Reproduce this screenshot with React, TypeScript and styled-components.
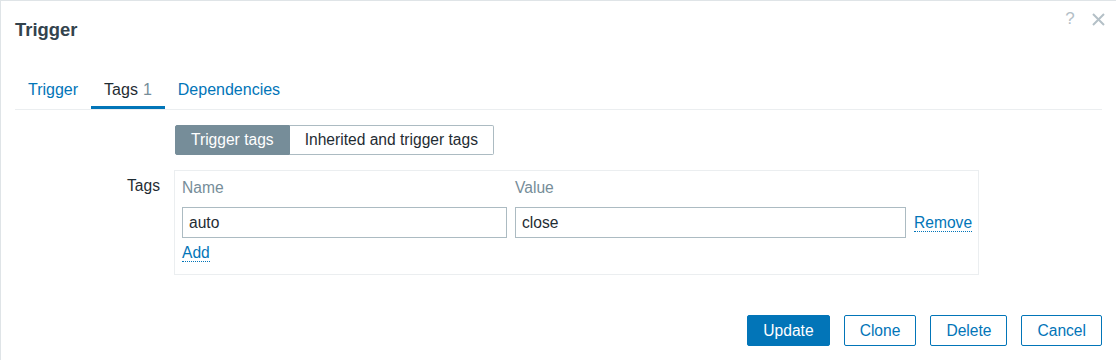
import React from 'react'
import styled, { createGlobalStyle } from 'styled-components'

const GlobalStyle = createGlobalStyle`
  html, body {
    margin: 0;
    padding: 0;
    background: #ffffff;
    overflow: hidden;
  }
  body {
    font-family: "Liberation Sans", Arial, sans-serif;
    font-size: 15.6px;
    color: #1f2c33;
  }
  * {
    box-sizing: border-box;
  }
`

const Dialog = styled.div`
  position: relative;
  display: flex;
  flex-direction: column;
  width: 1117px;
  height: 362px;
  border: 1px solid #dfe4e7;
  padding: 0 14px;
  background: #ffffff;
`

const Header = styled.div`
  display: flex;
  align-items: center;
  height: 58px;
`

const Title = styled.h4`
  margin: 0;
  font-size: 18.4px;
  font-weight: bold;
  color: #33434d;
`

const HeaderActions = styled.div`
  position: absolute;
  top: 8px;
  right: 8px;
  display: flex;
  gap: 8px;
`

const HeaderIcon = styled.button`
  display: flex;
  align-items: center;
  justify-content: center;
  width: 20px;
  height: 20px;
  padding: 0;
  border: 0;
  background: none;
  color: #b4c0c7;
  font-family: "Liberation Sans", Arial, sans-serif;
  font-size: 17px;
  cursor: pointer;
`

const TabList = styled.ul`
  display: flex;
  margin: 19px 0 0;
  padding: 0;
  list-style: none;
  border-bottom: 1px solid #ebeef0;
`

const Tab = styled.li<{ $active?: boolean }>`
  padding: 0 13px 4px;
  font-size: 16px;
  line-height: 24px;
  border-bottom: 3px solid ${(p) => (p.$active ? '#0275b8' : 'transparent')};
  color: ${(p) => (p.$active ? '#1f2c33' : '#0275b8')};
  cursor: pointer;
`

const TabCount = styled.span`
  margin-left: 5px;
  color: #768d99;
`

const Content = styled.div`
  padding-top: 15px;
`

const FormGrid = styled.div`
  display: grid;
  grid-template-columns: 145px auto;
  column-gap: 14px;
  row-gap: 15px;
  align-items: start;
`

const Label = styled.label`
  text-align: right;
  line-height: 24px;
  padding-top: 4px;
`

const Segmented = styled.div`
  display: flex;
  justify-self: start;
  margin-left: 1px;
`

const SegmentButton = styled.button<{ $active?: boolean }>`
  height: 30px;
  padding: 0 15px;
  font-family: inherit;
  font-size: 15.6px;
  background: ${(p) => (p.$active ? '#768d99' : '#ffffff')};
  color: ${(p) => (p.$active ? '#ffffff' : '#1f2c33')};
  border: 1px solid ${(p) => (p.$active ? '#768d99' : '#acbbc2')};
  cursor: pointer;

  &:first-child {
    border-radius: 2px 0 0 2px;
  }
  &:last-child {
    border-left: 0;
    border-radius: 0 2px 2px 0;
  }
`

const TagsTable = styled.div`
  display: grid;
  grid-template-columns: 325px 391px auto;
  column-gap: 8px;
  align-items: center;
  justify-self: start;
  width: 805px;
  padding: 4px 7px 9px;
  border: 1px solid #ebeef0;
`

const ColumnHead = styled.div`
  line-height: 26px;
  color: #768d99;
  margin-bottom: 6px;
`

const TextInput = styled.input`
  width: 100%;
  height: 31px;
  padding: 0 6px;
  border: 1px solid #acbbc2;
  border-radius: 0;
  font-family: inherit;
  font-size: 15.6px;
  color: #1f2c33;
  background: #ffffff;
  outline: none;
`

const LinkCell = styled.div`
  line-height: 24px;
`

const AddCell = styled(LinkCell)`
  grid-column: 1 / -1;
  margin-top: 3px;
`

const DottedLink = styled.a`
  color: #0275b8;
  text-decoration: none;
  border-bottom: 1px dotted #0275b8;
  cursor: pointer;
`

const Footer = styled.div`
  display: flex;
  justify-content: flex-end;
  gap: 14px;
  margin-top: 40px;
`

const Button = styled.button<{ $primary?: boolean }>`
  height: 31px;
  padding: 0 15px;
  font-family: inherit;
  font-size: 15.6px;
  border: 1px solid #0275b8;
  border-radius: 2px;
  background: ${(p) => (p.$primary ? '#0275b8' : '#ffffff')};
  color: ${(p) => (p.$primary ? '#ffffff' : '#0275b8')};
  cursor: pointer;
`

const CloseIcon = () => (
  <svg width="13" height="13" viewBox="0 0 13 13">
    <path d="M1 1 L12 12 M12 1 L1 12" stroke="#b4c0c7" strokeWidth="2" fill="none" />
  </svg>
)

const tags = [{ name: 'auto', value: 'close' }]

export default function App() {
  return (
    <>
      <GlobalStyle />
      <Dialog>
        <Header>
          <Title>Trigger</Title>
        </Header>
        <HeaderActions>
          <HeaderIcon title="Help">?</HeaderIcon>
          <HeaderIcon title="Close">
            <CloseIcon />
          </HeaderIcon>
        </HeaderActions>

        <TabList>
          <Tab>Trigger</Tab>
          <Tab $active>
            Tags<TabCount>1</TabCount>
          </Tab>
          <Tab>Dependencies</Tab>
        </TabList>

        <Content>
          <FormGrid>
            <div />
            <Segmented>
              <SegmentButton $active>Trigger tags</SegmentButton>
              <SegmentButton>Inherited and trigger tags</SegmentButton>
            </Segmented>

            <Label>Tags</Label>
            <TagsTable>
              <ColumnHead>Name</ColumnHead>
              <ColumnHead>Value</ColumnHead>
              <ColumnHead />
              {tags.map((tag) => (
                <React.Fragment key={tag.name}>
                  <TextInput defaultValue={tag.name} />
                  <TextInput defaultValue={tag.value} />
                  <LinkCell>
                    <DottedLink>Remove</DottedLink>
                  </LinkCell>
                </React.Fragment>
              ))}
              <AddCell>
                <DottedLink>Add</DottedLink>
              </AddCell>
            </TagsTable>
          </FormGrid>
        </Content>

        <Footer>
          <Button $primary>Update</Button>
          <Button>Clone</Button>
          <Button>Delete</Button>
          <Button>Cancel</Button>
        </Footer>
      </Dialog>
    </>
  )
}
